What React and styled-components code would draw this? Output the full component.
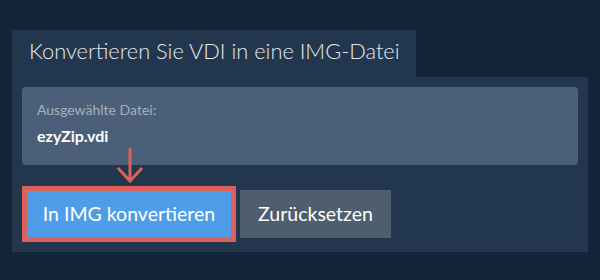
import React from "react"
import styled, { createGlobalStyle } from "styled-components"

const GlobalStyle = createGlobalStyle`
  html, body {
    margin: 0;
    padding: 0;
    background: #11243a;
    font-family: Lato, "Open Sans", sans-serif;
  }
`

const Page = styled.div`
  width: 600px;
  height: 280px;
  box-sizing: border-box;
  padding: 30px 12px 0 12px;
`

const Tab = styled.div`
  display: inline-block;
  width: 404px;
  height: 47px;
  box-sizing: border-box;
  padding: 7px 0 0 17px;
  background: #22374e;
  color: #e6e9ed;
  font-size: 21.8px;
  font-weight: 300;
  line-height: 28px;
  vertical-align: top;
`

const Panel = styled.div`
  background: #22374e;
  padding: 10px;
  display: flex;
  flex-direction: column;
`

const FileBox = styled.div`
  background: #4b6078;
  border-radius: 4px;
  height: 78px;
  box-sizing: border-box;
  padding: 14px 15px 0 15px;
`

const Label = styled.div`
  color: #a3b0bf;
  font-size: 14px;
  line-height: 18px;
`

const FileName = styled.div`
  color: #ffffff;
  font-size: 16px;
  font-weight: 700;
  line-height: 20px;
  margin-top: 7px;
`

const Actions = styled.div`
  position: relative;
  display: flex;
  align-items: center;
  gap: 4px;
  margin-top: 21px;
`

const Button = styled.button`
  margin: 0;
  width: ${p => (p.$primary ? "214px" : "151px")};
  height: ${p => (p.$primary ? "56px" : "48px")};
  box-sizing: border-box;
  padding: 0;
  background: ${p => (p.$primary ? "#4e9de6" : "#4e5e6e")};
  border: ${p => (p.$primary ? "5px solid #dd605a" : "none")};
  color: #ffffff;
  font-family: Lato, "Open Sans", sans-serif;
  font-size: 19.5px;
  font-weight: 400;
  line-height: 24px;
  text-align: center;
  cursor: pointer;
`

const Arrow = styled.svg`
  position: absolute;
  left: 94px;
  top: -39px;
`

const DownArrow = () => (
  <Arrow width="28" height="36" viewBox="0 0 28 36">
    <path
      d="M14 1 V34 M2 21 L14 34 L26 21"
      fill="none"
      stroke="#dd605a"
      strokeWidth="3"
    />
  </Arrow>
)

export default function App() {
  return (
    <Page>
      <GlobalStyle />
      <Tab>Konvertieren Sie VDI in eine IMG-Datei</Tab>
      <Panel>
        <FileBox>
          <Label>Ausgewählte Datei:</Label>
          <FileName>ezyZip.vdi</FileName>
        </FileBox>
        <Actions>
          <DownArrow />
          <Button $primary>In IMG konvertieren</Button>
          <Button>Zurücksetzen</Button>
        </Actions>
      </Panel>
    </Page>
  )
}
